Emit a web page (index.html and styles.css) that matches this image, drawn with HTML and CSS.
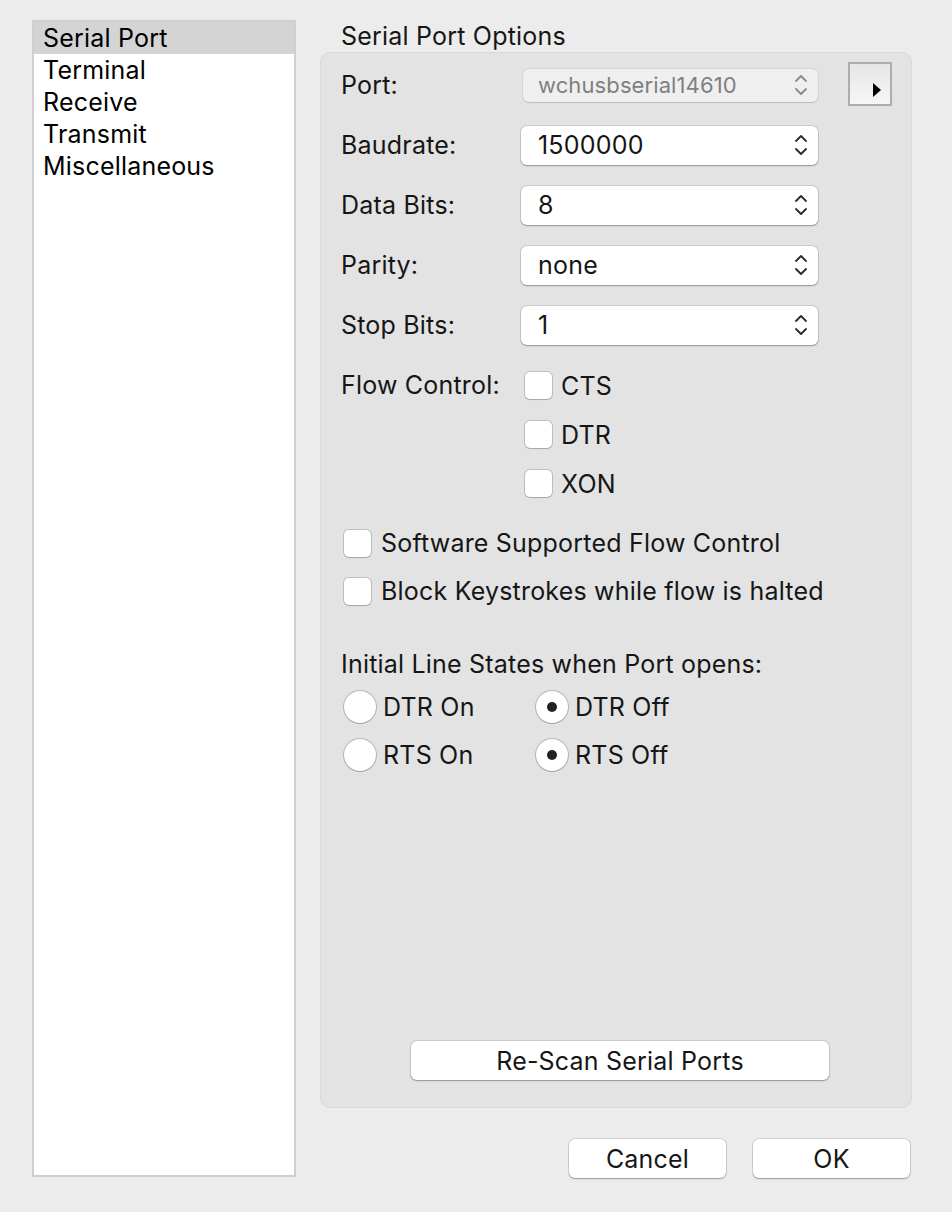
FILE: index.html
```html
<!DOCTYPE html>
<html>
<head>
<meta charset="utf-8">
<link rel="stylesheet" href="styles.css">
</head>
<body>
<div class="window">
  <aside class="sidebar">
    <ul class="list">
      <li class="item selected">Serial Port</li>
      <li class="item">Terminal</li>
      <li class="item">Receive</li>
      <li class="item">Transmit</li>
      <li class="item">Miscellaneous</li>
    </ul>
  </aside>
  <main class="pane">
    <h1 class="group-title">Serial Port Options</h1>
    <section class="group">
      <div class="form">
        <div class="row">
          <span class="label">Port:</span>
          <div class="popup disabled">
            <span class="popup-text">wchusbserial14610</span>
            <svg class="chev" width="14" height="24" viewBox="0 0 14 24"><path d="M2 8 L7 3 L12 8 M2 16 L7 21 L12 16" fill="none" stroke="currentColor" stroke-width="1.8" stroke-linecap="round" stroke-linejoin="round"/></svg>
          </div>
          <button class="disclosure"><svg width="10" height="16" viewBox="0 0 10 16"><path d="M1 1 L9 8 L1 15 Z" fill="#000"/></svg></button>
        </div>
        <div class="row">
          <span class="label">Baudrate:</span>
          <div class="popup">
            <span class="popup-text">1500000</span>
            <svg class="chev" width="14" height="24" viewBox="0 0 14 24"><path d="M2 8 L7 3 L12 8 M2 16 L7 21 L12 16" fill="none" stroke="currentColor" stroke-width="1.8" stroke-linecap="round" stroke-linejoin="round"/></svg>
          </div>
        </div>
        <div class="row">
          <span class="label">Data Bits:</span>
          <div class="popup">
            <span class="popup-text">8</span>
            <svg class="chev" width="14" height="24" viewBox="0 0 14 24"><path d="M2 8 L7 3 L12 8 M2 16 L7 21 L12 16" fill="none" stroke="currentColor" stroke-width="1.8" stroke-linecap="round" stroke-linejoin="round"/></svg>
          </div>
        </div>
        <div class="row">
          <span class="label">Parity:</span>
          <div class="popup">
            <span class="popup-text">none</span>
            <svg class="chev" width="14" height="24" viewBox="0 0 14 24"><path d="M2 8 L7 3 L12 8 M2 16 L7 21 L12 16" fill="none" stroke="currentColor" stroke-width="1.8" stroke-linecap="round" stroke-linejoin="round"/></svg>
          </div>
        </div>
        <div class="row">
          <span class="label">Stop Bits:</span>
          <div class="popup">
            <span class="popup-text">1</span>
            <svg class="chev" width="14" height="24" viewBox="0 0 14 24"><path d="M2 8 L7 3 L12 8 M2 16 L7 21 L12 16" fill="none" stroke="currentColor" stroke-width="1.8" stroke-linecap="round" stroke-linejoin="round"/></svg>
          </div>
        </div>

        <div class="flow">
          <span class="label flow-label">Flow Control:</span>
          <div class="flow-options">
            <label class="check flow-check"><span class="box"></span><span>CTS</span></label>
            <label class="check flow-check"><span class="box"></span><span>DTR</span></label>
            <label class="check flow-check"><span class="box"></span><span>XON</span></label>
          </div>
        </div>

        <label class="check wide-check first-wide"><span class="box"></span><span>Software Supported Flow Control</span></label>
        <label class="check wide-check"><span class="box"></span><span>Block Keystrokes while flow is halted</span></label>

        <div class="line-title">Initial Line States when Port opens:</div>
        <div class="radio-grid">
          <label class="radio"><span class="circle"></span><span>DTR On</span></label>
          <label class="radio"><span class="circle on"></span><span>DTR Off</span></label>
          <label class="radio"><span class="circle"></span><span>RTS On</span></label>
          <label class="radio"><span class="circle on"></span><span>RTS Off</span></label>
        </div>
      </div>
      <div class="rescan-row">
        <button class="push rescan">Re-Scan Serial Ports</button>
      </div>
    </section>
    <div class="actions">
      <button class="push action">Cancel</button>
      <button class="push action">OK</button>
    </div>
  </main>
</div>
</body>
</html>
```

FILE: styles.css
```css
* { box-sizing: border-box; }

html, body {
  margin: 0;
  padding: 0;
  background: #ececec;
}

body {
  font-family: Inter, "Liberation Sans", Arial, sans-serif;
  font-size: 25px;
  letter-spacing: 0.2px;
  color: #161616;
  width: 952px;
  height: 1212px;
  overflow: hidden;
}

.window {
  display: flex;
  gap: 24px;
  padding: 20px 0 0 32px;
}

/* Sidebar list */
.sidebar {
  width: 264px;
  height: 1157px;
  border: 2px solid #cfcfcf;
  background: #fff;
}

.list {
  list-style: none;
  margin: 0;
  padding: 0;
}

.item {
  height: 32px;
  line-height: 31px;
  padding: 1px 0 0 9px;
  color: #000;
}

.item.selected {
  background: #d4d4d4;
}

/* Right pane */
.pane {
  width: 592px;
  display: flex;
  flex-direction: column;
}

.group-title {
  margin: 0;
  font-size: 25px;
  font-weight: normal;
  height: 32px;
  line-height: 33px;
  padding-left: 21px;
  color: #161616;
}

.group {
  height: 1056px;
  background: #e3e3e3;
  border: 1px solid #d9d9d9;
  border-radius: 10px;
  display: flex;
  flex-direction: column;
}

.form {
  padding: 2px 0 0 20px;
  display: flex;
  flex-direction: column;
}

.row {
  height: 60px;
  display: flex;
  align-items: center;
}

.label {
  width: 180px;
  flex: none;
}

.popup {
  width: 297px;
  height: 39px;
  background: #fff;
  border-radius: 6px;
  box-shadow: 0 0 0 1px rgba(0,0,0,0.10), 0 1px 1.5px rgba(0,0,0,0.28);
  display: flex;
  align-items: center;
  justify-content: space-between;
  padding: 0 10px 0 17px;
  color: #161616;
}

.popup .chev { color: #2a2a2a; }

.popup.disabled {
  width: 295px;
  height: 33px;
  margin-left: 2px;
  background: #efefef;
  box-shadow: 0 0 0 1px rgba(0,0,0,0.06), 0 1px 1px rgba(0,0,0,0.10);
  color: #808080;
  font-size: 22px;
  letter-spacing: 0.1px;
  padding-left: 15px;
}

.popup.disabled .chev { color: #8a8a8a; }

.disclosure {
  margin-left: 30px;
  width: 44px;
  height: 44px;
  margin-top: -3px;
  border: 2px solid #adadad;
  background: linear-gradient(#e6e6e6, #f6f6f6);
  display: flex;
  align-items: flex-end;
  justify-content: flex-end;
  padding: 0 8px 6px 0;
}

/* Flow control */
.flow {
  display: flex;
  margin-top: 6px;
}

.flow-label {
  height: 49px;
  line-height: 49px;
}

.flow-options {
  display: flex;
  flex-direction: column;
}

.check {
  display: flex;
  align-items: center;
}

.box {
  width: 27px;
  height: 27px;
  border-radius: 5px;
  background: #fff;
  box-shadow: 0 0 0 1px rgba(0,0,0,0.16), 0 1px 1px rgba(0,0,0,0.12);
  flex: none;
}

.flow-check {
  height: 49px;
  padding-left: 4px;
  gap: 9px;
}

.wide-check {
  height: 48px;
  padding-left: 3px;
  gap: 10px;
}

.first-wide {
  margin-top: 11px;
}

.line-title {
  margin-top: 33px;
  height: 32px;
  line-height: 32px;
}

.radio-grid {
  margin-top: 3px;
  display: grid;
  grid-template-columns: 192px 192px;
  grid-auto-rows: 48px;
}

.radio {
  display: flex;
  align-items: center;
  gap: 7px;
  padding-left: 3px;
}

.circle {
  width: 32px;
  height: 32px;
  border-radius: 50%;
  background: #fff;
  box-shadow: 0 0 0 1px rgba(0,0,0,0.18), 0 1px 1px rgba(0,0,0,0.12);
  flex: none;
  display: flex;
  align-items: center;
  justify-content: center;
}

.circle.on::after {
  content: "";
  width: 10px;
  height: 10px;
  border-radius: 50%;
  background: #222;
}

/* Buttons */
.push {
  font-family: inherit;
  font-size: 25px;
  letter-spacing: 0.2px;
  color: #161616;
  background: #fff;
  border: none;
  border-radius: 6px;
  box-shadow: 0 0 0 1px rgba(0,0,0,0.10), 0 1px 1.5px rgba(0,0,0,0.28);
  height: 39px;
  padding: 0;
}

.rescan-row {
  margin-top: auto;
  padding: 0 0 27px 90px;
}

.rescan {
  width: 418px;
}

.actions {
  margin-top: 31px;
  display: flex;
  justify-content: flex-end;
  gap: 27px;
  padding-right: 2px;
}

.action {
  width: 157px;
}
```
